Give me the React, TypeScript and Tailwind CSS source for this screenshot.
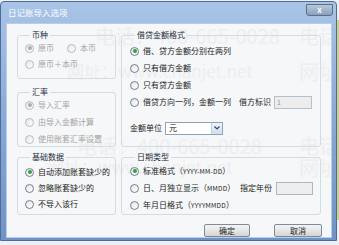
import React from "react";

function Radio({ checked = false, disabled = false }: { checked?: boolean; disabled?: boolean }) {
  return (
    <span
      className={`inline-flex h-[9px] w-[9px] shrink-0 items-center justify-center rounded-full border ${
        disabled ? "border-[#b5bcc4]" : "border-[#6f7f90]"
      } bg-gradient-to-br from-[#e2e6ea] to-[#ffffff]`}
    >
      {checked && (
        <span className={`h-[4px] w-[4px] rounded-full ${disabled ? "bg-[#a5acb3]" : "bg-[#2fa33a]"}`} />
      )}
    </span>
  );
}

function Opt({
  children,
  checked,
  disabled,
}: {
  children: React.ReactNode;
  checked?: boolean;
  disabled?: boolean;
}) {
  return (
    <div className="flex h-[14px] shrink-0 items-center gap-[4px] whitespace-nowrap">
      <Radio checked={checked} disabled={disabled} />
      <span className={`leading-none ${disabled ? "text-[#a4a4a4]" : "text-[#1b1b1b]"}`}>{children}</span>
    </div>
  );
}

function Legend({ children }: { children: React.ReactNode }) {
  return (
    <legend className="ml-[5px] whitespace-nowrap px-[2px] text-[8px] leading-[12px] text-[#1d2c40]">
      {children}
    </legend>
  );
}

function Latin({ children }: { children: React.ReactNode }) {
  return <span className="text-[6.5px] tracking-[0.2px]">{children}</span>;
}

export default function App() {
  return (
    <div className="relative h-[245px] w-[339px] overflow-hidden bg-[#eef1f3] font-['Noto_Sans_CJK_SC',sans-serif]">
      <div className="absolute right-0 top-[20px] h-[200px] w-[2px] bg-[#c9d48a]" />
      <div className="mt-[1px] flex h-[240px] w-[337px] flex-col rounded-t-[4px] border border-[#4d6d98] bg-gradient-to-b from-[#a9c4e6] via-[#88a9d6] to-[#6f93c4]">
        {/* title bar */}
        <div className="flex h-[21px] shrink-0 items-center justify-between pl-[7px] pr-[3px]">
          <span className="text-[8.5px] leading-none text-white">日记账导入选项</span>
          <div className="mb-[5px] flex h-[12px] w-[27px] items-center justify-center rounded-b-[3px] border border-[#5a6f8d] bg-gradient-to-b from-[#b9c7d9] to-[#8ba0bd] text-[8px] font-bold leading-none text-white">
            x
          </div>
        </div>
        {/* client area */}
        <div className="relative mb-[4px] ml-[5px] mr-[4px] flex-1 border border-[#b9cde6] bg-[#f6f7f8]">
          {/* watermark */}
          <div className="pointer-events-none absolute inset-0 select-none overflow-hidden whitespace-nowrap text-[20px] leading-none text-[#eceef0]">
            <div className="absolute left-[88px] top-[2px]">电话：400-665-0028</div>
            <div className="absolute left-[292px] top-[2px]">电话</div>
            <div className="absolute left-[60px] top-[38px] text-[17px]">网址：www.chanjet.net</div>
            <div className="absolute left-[292px] top-[38px]">网址</div>
            <div className="absolute left-[70px] top-[112px]">电话：400-665-0028</div>
            <div className="absolute left-[292px] top-[112px]">电话</div>
            <div className="absolute left-[40px] top-[134px] text-[17px]">网址：www.chanjet.net</div>
            <div className="absolute left-[292px] top-[134px]">网址</div>
          </div>

          <div className="relative flex h-full flex-col pl-[10px] pr-[8px] pt-[5px] text-[8px]">
            <div className="flex gap-[5px]">
              {/* left column */}
              <div className="flex w-[99px] shrink-0 flex-col gap-[7px]">
                <fieldset className="h-[50px] min-w-0 rounded-[3px] border border-[#d3dbe3] pl-[7px]">
                  <Legend>币种</Legend>
                  <div className="flex flex-col gap-[2px]">
                    <div className="flex gap-[13px]">
                      <Opt checked disabled>原币</Opt>
                      <Opt disabled>本币</Opt>
                    </div>
                    <Opt disabled>原币＋本币</Opt>
                  </div>
                </fieldset>
                <fieldset className="h-[61px] min-w-0 rounded-[3px] border border-[#d3dbe3] pl-[7px]">
                  <Legend>汇率</Legend>
                  <div className="flex flex-col gap-[3px]">
                    <Opt checked disabled>导入汇率</Opt>
                    <Opt disabled>由导入金额计算</Opt>
                    <Opt disabled>使用账套汇率设置</Opt>
                  </div>
                </fieldset>
              </div>
              {/* right column */}
              <fieldset className="h-[118px] w-[200px] min-w-0 shrink-0 rounded-[3px] border border-[#d3dbe3] pl-[8px] pr-[8px]">
                <Legend>借贷金额格式</Legend>
                <div className="flex flex-col gap-[3px] pt-[3px]">
                  <Opt checked>借、贷方金额分别在两列</Opt>
                  <Opt>只有借方金额</Opt>
                  <Opt>只有贷方金额</Opt>
                  <div className="flex h-[14px] items-center whitespace-nowrap">
                    <Opt>借贷方向一列，金额一列</Opt>
                    <div className="ml-auto flex items-center gap-[3px]">
                      <span className="leading-none text-[#1b1b1b]">借方标识</span>
                      <div className="flex h-[13px] w-[38px] items-center border border-[#b4c0cc] bg-[#ededed] pl-[2px] text-[7px] leading-none text-[#9a9a9a]">
                        1
                      </div>
                    </div>
                  </div>
                  <div className="mt-[9px] flex h-[14px] items-center gap-[3px] whitespace-nowrap">
                    <span className="leading-none text-[#1b1b1b]">金额单位</span>
                    <div className="flex h-[13px] w-[58px] items-center justify-between border border-[#8ea3bb] bg-white pl-[3px]">
                      <span className="leading-none text-[#1b1b1b]">元</span>
                      <div className="flex h-full w-[11px] items-center justify-center border-l border-[#c4d2e2] bg-gradient-to-b from-[#eef3f9] to-[#d3e0ef]">
                        <svg width="6" height="4" viewBox="0 0 6 4">
                          <path d="M0.5 0.5 L3 3 L5.5 0.5" stroke="#2d4a73" strokeWidth="1.2" fill="none" />
                        </svg>
                      </div>
                    </div>
                  </div>
                </div>
              </fieldset>
            </div>

            <div className="mt-[4px] flex gap-[5px]">
              <fieldset className="h-[64px] w-[99px] min-w-0 shrink-0 rounded-[3px] border border-[#d3dbe3] pl-[7px]">
                <Legend>基础数据</Legend>
                <div className="flex flex-col gap-[2px] pt-[2px]">
                  <Opt checked>自动添加账套缺少的</Opt>
                  <Opt>忽略账套缺少的</Opt>
                  <Opt>不导入该行</Opt>
                </div>
              </fieldset>
              <fieldset className="h-[64px] w-[200px] min-w-0 shrink-0 rounded-[3px] border border-[#d3dbe3] pl-[8px] pr-[7px]">
                <Legend>日期类型</Legend>
                <div className="flex flex-col gap-[3px] pt-[1px]">
                  <Opt checked>
                    标准格式（<Latin>YYYY-MM-DD</Latin>）
                  </Opt>
                  <div className="flex h-[14px] items-center whitespace-nowrap">
                    <Opt>
                      日、月独立显示（<Latin>MMDD</Latin>）
                    </Opt>
                    <div className="ml-auto flex items-center gap-[4px]">
                      <span className="leading-none text-[#1b1b1b]">指定年份</span>
                      <div className="h-[13px] w-[37px] border border-[#a9b8c8] bg-[#eeeeee]" />
                    </div>
                  </div>
                  <Opt>
                    年月日格式（<Latin>YYYYMMDD</Latin>）
                  </Opt>
                </div>
              </fieldset>
            </div>

            <div className="mt-[9px] flex justify-end gap-[24px] pr-[1px]">
              <button className="flex h-[13px] w-[46px] items-center justify-center rounded-[2px] border border-[#7d8b9b] bg-gradient-to-b from-[#f4f4f4] via-[#e6e6e6] to-[#d3d3d3] text-[8px] leading-none text-[#1b1b1b]">
                确定
              </button>
              <button className="flex h-[13px] w-[48px] items-center justify-center rounded-[2px] border border-[#7d8b9b] bg-gradient-to-b from-[#f4f4f4] via-[#e6e6e6] to-[#d3d3d3] text-[8px] leading-none text-[#1b1b1b]">
                取消
              </button>
            </div>
          </div>
        </div>
      </div>
    </div>
  );
}
